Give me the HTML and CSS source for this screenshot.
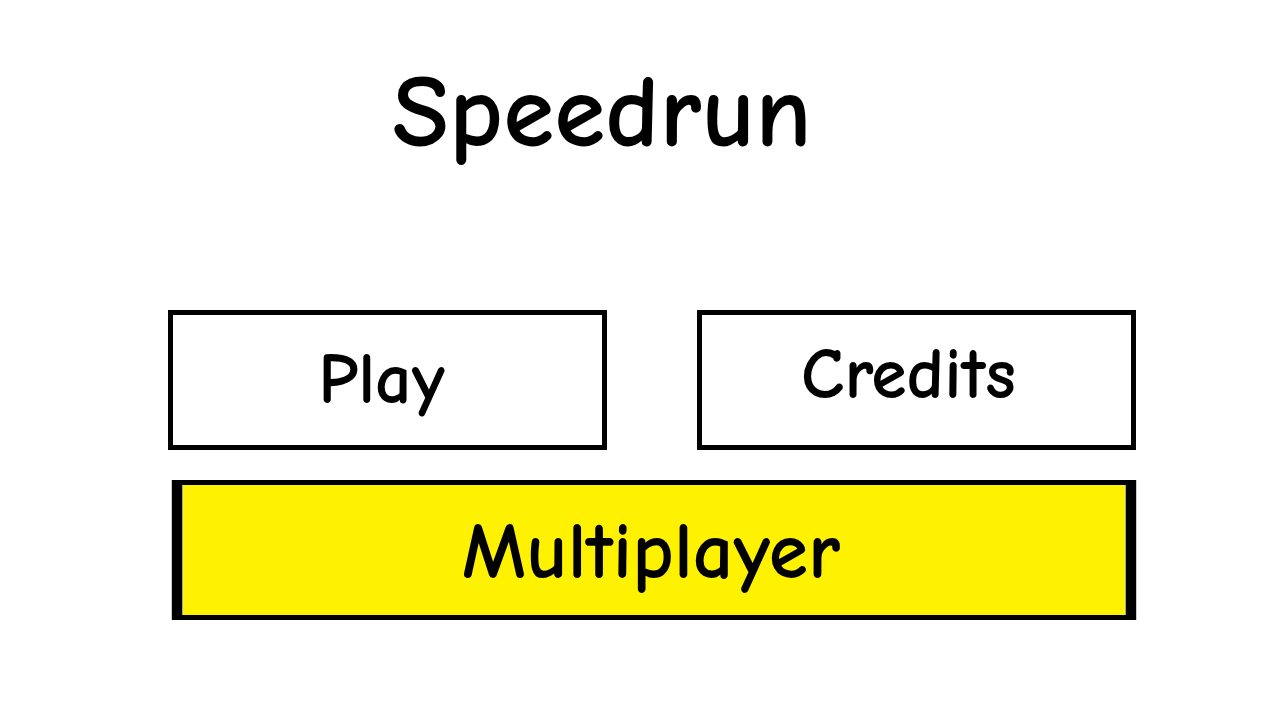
FILE: index.html
```html
<!DOCTYPE html>
<html lang="en">
<head>
<meta charset="utf-8">
<title>Speedrun</title>
<link rel="stylesheet" href="styles.css">
</head>
<body>
<main class="menu">
<h1 class="title">Speedrun</h1>
<nav class="options">
<button class="option play" type="button">Play</button>
<button class="option credits" type="button">Credits</button>
<button class="option multiplayer" type="button">Multiplayer</button>
</nav>
</main>
</body>
</html>
```
FILE: styles.css
```css
* { box-sizing: border-box; }
body {
  margin: 0;
  background: #fff;
  color: #000;
  font-family: "Comic Sans MS", "Comic Neue", Lato, sans-serif;
}
.menu { padding: 46px 144px 100px 168px; }
.title {
  margin: 0 72px 132px 0;
  padding-right: 28px;
  font-size: 104px;
  line-height: 132px;
  font-weight: 700;
  text-align: center;
}
.options {
  display: grid;
  grid-template-columns: 1fr 1fr;
  gap: 30px 90px;
}
.option {
  min-height: 140px;
  padding: 0;
  border: 5px solid #000;
  background: #fff;
  color: #000;
  font-family: inherit;
  font-size: 72px;
  font-weight: 700;
  line-height: 80px;
}
.play { padding-right: 12px; }
.credits { padding: 0 16px 10px 0; }
.multiplayer {
  grid-column: 1 / -1;
  margin-left: 4px;
  padding: 4px 6px 0 0;
  border-width: 5px 10px;
  background: #fff200;
  box-shadow: 1px 0 #ccc, -1px 0 #ccc, inset 1px 0 #aaa88c, inset -1px 0 #aaa88c;
  font-size: 80px;
}
```
